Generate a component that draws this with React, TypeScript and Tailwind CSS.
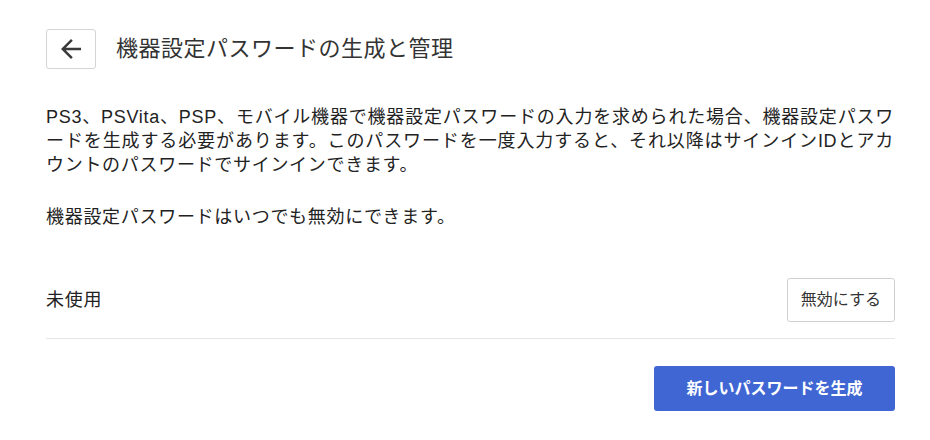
const BackArrow = () => (
  <svg width="30" height="30" viewBox="0 0 24 24" fill="currentColor">
    <path d="M20 11H7.83l5.59-5.59L12 4l-8 8 8 8 1.41-1.41L7.83 13H20v-2z" />
  </svg>
);

const App = () => {
  return (
    <div
      className="w-[930px] h-[440px] bg-white text-[#222] pl-[46px] pr-[35px] pt-[29px]"
      style={{ fontFamily: '"Liberation Sans", "Noto Sans CJK JP", sans-serif' }}
    >
      <div className="flex items-center gap-5">
        <button className="w-[50px] h-[40px] border border-[#d4d4d4] rounded-[3px] flex items-center justify-center text-[#3a3a3a]">
          <BackArrow />
        </button>
        <h1 className="text-[22px] tracking-[0.5px] text-[#333] leading-none">機器設定パスワードの生成と管理</h1>
      </div>

      <div className="mt-[36px] text-[18px] tracking-[0.7px] leading-[24px] w-[848px]">
        <p className="text-justify">
          PS3、PSVita、PSP、モバイル機器で機器設定パスワードの入力を求められた場合、機器設定パスワードを生成する必要があります。このパスワードを一度入力すると、それ以降はサインインIDとアカウントのパスワードでサインインできます。
        </p>
        <p className="mt-7">機器設定パスワードはいつでも無効にできます。</p>
      </div>

      <div className="mt-[49px] flex items-center justify-between pb-[16px] border-b border-[#e6e6e6]">
        <span className="text-[18px] tracking-[0.7px]">未使用</span>
        <button className="h-[44px] px-[13px] border border-[#d0d0d0] rounded-[3px] text-[16px] text-[#333] bg-white">
          無効にする
        </button>
      </div>

      <div className="flex justify-end mt-[27px]">
        <button className="w-[241px] h-[45px] rounded-[3px] bg-[#4066d4] text-white text-[16px] font-bold">
          新しいパスワードを生成
        </button>
      </div>
    </div>
  );
};

export default App;
